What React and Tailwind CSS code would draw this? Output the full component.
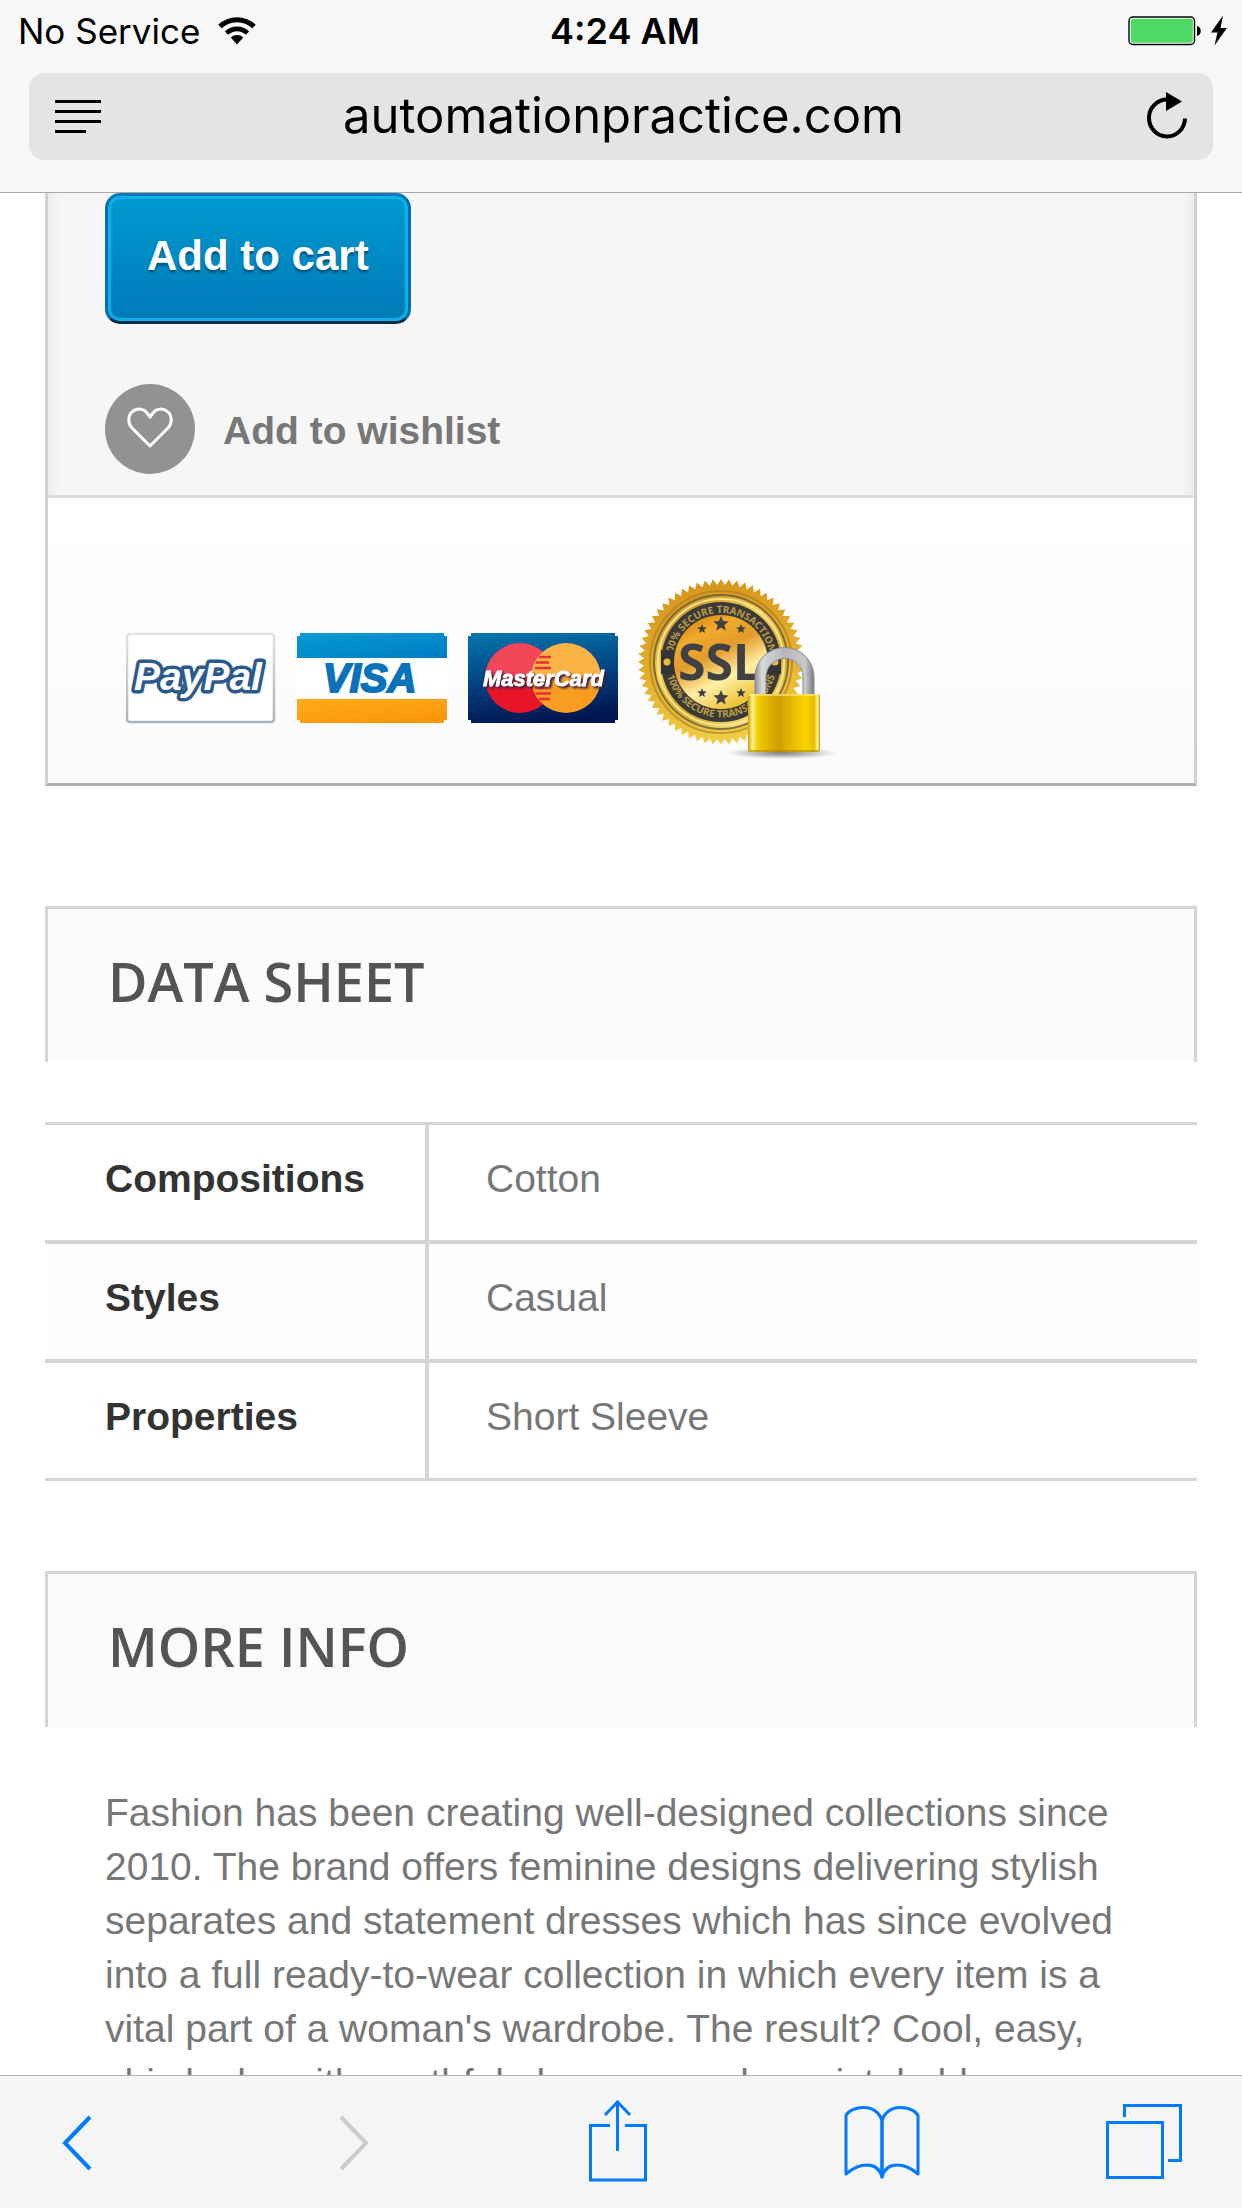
import React from "react";

const sheet = [
  ["Compositions", "Cotton"],
  ["Styles", "Casual"],
  ["Properties", "Short Sleeve"],
];

function starPoints(cx, cy, r) {
  return Array.from({ length: 10 }, (_, i) => {
    const a = (Math.PI / 5) * i - Math.PI / 2;
    const d = i % 2 ? r * 0.45 : r;
    return `${(cx + d * Math.cos(a)).toFixed(1)},${(cy + d * Math.sin(a)).toFixed(1)}`;
  }).join(" ");
}

function sealPoints(cx, cy, outer, inner, teeth) {
  return Array.from({ length: teeth * 2 }, (_, i) => {
    const a = (Math.PI / teeth) * i;
    const d = i % 2 ? inner : outer;
    return `${(cx + d * Math.cos(a)).toFixed(1)},${(cy + d * Math.sin(a)).toFixed(1)}`;
  }).join(" ");
}

function Wifi() {
  return (
    <svg width="38" height="28" viewBox="0 0 38 28" fill="none" stroke="#000" aria-label="Wi-Fi" role="img">
      <path d="M2 9.5a24.5 24.5 0 0 1 34 0" strokeWidth="5" />
      <path d="M8.5 16.2a15 15 0 0 1 21 0" strokeWidth="4.6" />
      <path d="M12.8 20.6a9 9 0 0 1 12.4 0L19 27.5Z" fill="#000" stroke="none" />
    </svg>
  );
}

function Battery() {
  return (
    <svg width="104" height="32" viewBox="0 0 104 32" aria-label="Battery charging" role="img">
      <rect x="1" y="2" width="65.5" height="27.5" rx="4" fill="#fff" stroke="#000" strokeWidth="1.4" />
      <rect x="2.8" y="3.8" width="62" height="24" rx="2.5" fill="#4cd964" />
      <path d="M69 11c5 1 5 9 0 10Z" fill="#000" />
      <path d="M95 0.5 83 17.5h6.5L86.500 30.500 99 13h-6.500Z" fill="#000" />
    </svg>
  );
}

function PayPalCard() {
  return (
    <svg width="150" height="92" viewBox="0 0 150 92" role="img" aria-label="PayPal">
      <defs>
        <linearGradient id="ppEdge" x1="0" y1="0" x2="0" y2="1">
          <stop offset="0" stopColor="#dfe4e6" />
          <stop offset="1" stopColor="#a9b4bb" />
        </linearGradient>
      </defs>
      <rect x="1" y="2" width="147" height="88" rx="3" fill="#fff" stroke="url(#ppEdge)" strokeWidth="2.6" />
      <text x="8" y="58" fontFamily="Liberation Sans, sans-serif" fontWeight="700" fontStyle="italic" fontSize="39" fill="#fff" stroke="#2c5a8c" strokeWidth="7" strokeLinejoin="round" paintOrder="stroke">PayPal</text>
    </svg>
  );
}

function VisaCard() {
  return (
    <svg width="150" height="92" viewBox="0 0 150 92" role="img" aria-label="Visa">
      <defs>
        <linearGradient id="visaTop" x1="0" y1="0" x2="1" y2="1">
          <stop offset="0" stopColor="#049bd6" />
          <stop offset="1" stopColor="#007cc4" />
        </linearGradient>
        <linearGradient id="visaBottom" x1="0" y1="0" x2="0.6" y2="1">
          <stop offset="0" stopColor="#fcab1b" />
          <stop offset="1" stopColor="#fd970a" />
        </linearGradient>
      </defs>
      <rect width="150" height="91" rx="3" fill="#fff" />
      <path d="M0 26V4h3V1h144v3h3v22Z" fill="url(#visaTop)" />
      <path d="M0 67h150v21h-3v3H3v-3H0Z" fill="url(#visaBottom)" />
      <text x="26" y="60" fontFamily="Liberation Sans, sans-serif" fontWeight="700" fontStyle="italic" fontSize="40" fill="#0a72b9" stroke="#0a72b9" strokeWidth="2">VISA</text>
    </svg>
  );
}

function MasterCard() {
  return (
    <svg width="150" height="92" viewBox="0 0 150 92" role="img" aria-label="MasterCard">
      <defs>
        <linearGradient id="mcBg" x1="0.2" y1="0" x2="0.4" y2="1">
          <stop offset="0" stopColor="#0374ab" />
          <stop offset="0.5" stopColor="#044483" />
          <stop offset="1" stopColor="#011651" />
        </linearGradient>
        <linearGradient id="mcRed" x1="0" y1="0" x2="0" y2="1">
          <stop offset="0.45" stopColor="#f24657" />
          <stop offset="0.55" stopColor="#e8152a" />
        </linearGradient>
        <linearGradient id="mcGold" x1="0" y1="0" x2="0" y2="1">
          <stop offset="0.45" stopColor="#fbb345" />
          <stop offset="0.55" stopColor="#f99d20" />
        </linearGradient>
      </defs>
      <path d="M0 4h3V1h144v3h3v84h-3v3H3v-3H0Z" fill="url(#mcBg)" />
      <circle cx="52" cy="46" r="35" fill="url(#mcRed)" />
      <circle cx="98" cy="46" r="35" fill="url(#mcGold)" />
      <path d="M71 25h12M68 30.500h13M67 36h16M67 56h13M68 61.500h15M71 67h11" stroke="#e8303a" strokeWidth="2.4" />
      <text x="15" y="54" fontFamily="Liberation Sans, sans-serif" fontWeight="700" fontStyle="italic" fontSize="22" fill="#fff" stroke="#fff" strokeWidth="0.8" className="drop-shadow-[2px_2px_1px_#3a2340]">MasterCard</text>
    </svg>
  );
}

function SslSeal() {
  return (
    <svg width="200" height="190" viewBox="0 0 200 190" role="img" aria-label="SSL 100% secure transactions">
      <defs>
        <linearGradient id="sealEdge" x1="0.4" y1="0" x2="0.6" y2="1">
          <stop offset="0" stopColor="#d8941c" />
          <stop offset="0.5" stopColor="#e2b02c" />
          <stop offset="1" stopColor="#f2d04a" />
        </linearGradient>
        <linearGradient id="sealRim" x1="0.2" y1="0" x2="0.8" y2="1">
          <stop offset="0" stopColor="#c98a18" />
          <stop offset="0.35" stopColor="#f3cf55" />
          <stop offset="0.7" stopColor="#d6a822" />
          <stop offset="1" stopColor="#fdf0a0" />
        </linearGradient>
        <linearGradient id="sealFace" x1="0.2" y1="0" x2="0.7" y2="1">
          <stop offset="0" stopColor="#d5850f" />
          <stop offset="0.2" stopColor="#f0ab2d" />
          <stop offset="0.42" stopColor="#e39c28" />
          <stop offset="0.68" stopColor="#fff0a8" />
          <stop offset="1" stopColor="#eabb20" />
        </linearGradient>
        <linearGradient id="lockBody" x1="0" y1="0" x2="1" y2="0">
          <stop offset="0" stopColor="#c9a200" />
          <stop offset="0.06" stopColor="#fff08a" />
          <stop offset="0.14" stopColor="#f0cc00" />
          <stop offset="0.42" stopColor="#cf9f00" />
          <stop offset="0.8" stopColor="#fbd500" />
          <stop offset="0.92" stopColor="#e8bd00" />
          <stop offset="0.97" stopColor="#fff3a0" />
          <stop offset="1" stopColor="#b99000" />
        </linearGradient>
        <linearGradient id="shackle" x1="0" y1="0" x2="1" y2="0">
          <stop offset="0" stopColor="#8e9094" />
          <stop offset="0.12" stopColor="#d8d9dd" />
          <stop offset="0.5" stopColor="#b5b6ba" />
          <stop offset="0.85" stopColor="#c9cacd" />
          <stop offset="1" stopColor="#77797d" />
        </linearGradient>
        <radialGradient id="lockShadow">
          <stop offset="0" stopColor="#000" stopOpacity="0.5" />
          <stop offset="1" stopColor="#000" stopOpacity="0" />
        </radialGradient>
        <path id="arcTop" d="M36 90a49 49 0 0 1 98 0" />
        <path id="arcBottom" d="M29.500 90a55.500 55.500 0 0 0 111 0" />
      </defs>
      <polygon points={sealPoints(85, 90, 83, 77, 64)} fill="url(#sealEdge)" />
      <circle cx="85" cy="90" r="71" fill="none" stroke="#a87a20" strokeWidth="2" opacity="0.6" />
      <circle cx="85" cy="90" r="68" fill="#5d5640" opacity="0.75" />
      <circle cx="85" cy="90" r="66" fill="url(#sealRim)" />
      <circle cx="85" cy="90" r="63" fill="none" stroke="#fbe48a" strokeWidth="2" />
      <circle cx="85" cy="90" r="60" fill="#3b3a38" />
      <circle cx="85" cy="90" r="47" fill="url(#sealFace)" />
      <text fontFamily="Noto Sans, sans-serif" fontWeight="700" fontSize="10" fill="#b99a45" textAnchor="middle">
        <textPath href="#arcTop" startOffset="50%">100% SECURE TRANSACTIONS</textPath>
      </text>
      <text fontFamily="Noto Sans, sans-serif" fontWeight="700" fontSize="10" fill="#b99a45" textAnchor="middle">
        <textPath href="#arcBottom" startOffset="50%">100% SECURE TRANSACTIONS</textPath>
      </text>
      <path d="M25 78h13v24H25zM132 78h13v24h-13z" fill="#33343a" />
      <circle cx="31" cy="90" r="3.500" fill="#e8bc3c" />
      <circle cx="139" cy="90" r="3.500" fill="#e8bc3c" />
      <g fill="#3f4043">
        <polygon points={starPoints(85, 52, 8)} />
        <polygon points={starPoints(66, 57, 5)} />
        <polygon points={starPoints(105, 57, 5)} />
        <polygon points={starPoints(85, 126, 8)} />
        <polygon points={starPoints(66, 121, 5)} />
        <polygon points={starPoints(105, 121, 5)} />
      </g>
      <text x="42" y="108" fontFamily="Noto Sans, sans-serif" fontWeight="700" fontSize="50" fill="#3f4145">SSL</text>
      <ellipse cx="146" cy="181" rx="55" ry="6" fill="url(#lockShadow)" />
      <path d="M119 124v-19a29.500 29.500 0 0 1 59 0v19h-11v-19a18.500 18.500 0 0 0-37 0v19Z" fill="url(#shackle)" stroke="#8b8c90" strokeWidth="1" />
      <rect x="112" y="122" width="72" height="58" rx="2" fill="url(#lockBody)" />
      <path d="M113 123h70" stroke="#fff3a0" strokeWidth="1.500" opacity="0.7" />
      <path d="M113 179h70" stroke="#a37d00" strokeWidth="1.500" opacity="0.7" />
    </svg>
  );
}

function SectionHeading({ children }) {
  return (
    <h3 className="border-x-[3px] border-t-[3px] border-[#d6d4d4] bg-[#fbfbfb] px-[60px] pt-[42px] pb-[51px] font-['Open_Sans',sans-serif] text-[54px] leading-[60px] font-semibold text-[#555454] uppercase">
      {children}
    </h3>
  );
}

export default function App() {
  return (
    <div className="flex h-screen flex-col overflow-hidden bg-white font-['Liberation_Sans',Arial,sans-serif] text-[39px] leading-[54px] text-[#777777]">
      <header className="shrink-0 border-b border-[#a9a9a9] bg-[#f7f7f7] pb-8 font-[Inter,sans-serif] text-black">
        <div className="grid h-[73px] grid-cols-3 items-center pr-[10px] pb-[11px] pl-[18px] text-[35px] leading-[40px]">
          <div className="flex items-center gap-[18px]">
            <span>No Service</span>
            <Wifi />
          </div>
          <div className="text-center text-[36px] font-semibold">4:24 AM</div>
          <div className="flex justify-end">
            <Battery />
          </div>
        </div>
        <div className="mx-[29px] flex h-[87px] items-center rounded-[15px] bg-[#e3e4e6] px-[25px]">
          <button type="button" aria-label="Reader view" className="shrink-0">
            <svg width="47" height="36" viewBox="0 0 47 36" stroke="#000" strokeWidth="3">
              <path d="M1 2.500h46M1 12.500h46M1 22.500h46M1 32.500h31" />
            </svg>
          </button>
          <input
            type="text"
            aria-label="Address"
            defaultValue="automationpractice.com"
            className="min-w-0 flex-1 bg-transparent pb-[2px] text-center text-[49px] leading-[60px] outline-none"
          />
          <button type="button" aria-label="Reload" className="shrink-0">
            <svg width="42" height="50" viewBox="0 2 42 50" fill="none" stroke="#000" strokeWidth="4">
              <path d="M21 9.500a18 18.500 0 1 0 18 19" />
              <path d="M20 2v19l16-9.500Z" fill="#000" stroke="none" />
            </svg>
          </button>
        </div>
      </header>

      <main className="min-h-0 flex-1 overflow-hidden px-[45px]">
        <section className="border-x-[3px] border-b-[3px] border-x-[#d2d0d0] border-b-[#b0b0b0]">
          <div className="flex flex-col items-start gap-[60px] border-b-[3px] border-[#dddddd] bg-[#f6f6f6] px-[57px] pb-[21px] shadow-[inset_18px_0_18px_-18px_rgba(0,0,0,0.08),inset_-18px_0_18px_-18px_rgba(0,0,0,0.08)]">
            <button
              type="button"
              className="rounded-[15px] border-[3px] border-[#0a6fa8] border-t-[#0778b3] border-b-[#012b45] bg-linear-to-b from-[#009ad0] to-[#007ab7] px-[39px] pt-[30px] pb-[35px] text-[42px] leading-[60px] font-bold text-white shadow-[inset_0_0_0_3px_#0bb1ea] [text-shadow:0_3px_2px_#015883]"
            >
              Add to cart
            </button>
            <a href="#wishlist" className="flex items-center gap-[28px] font-bold">
              <span className="flex size-[90px] items-center justify-center rounded-full bg-[#929292] pb-[3px]">
                <svg width="46" height="42" viewBox="0 0 46 42" fill="none" stroke="#fff" strokeWidth="3" strokeLinejoin="round">
                  <path d="M23 39 5 21C1 17 .5 9 5 5c5-4.500 12-3.500 15 1l3 4 3-4c3-4.500 10-5.500 15-1 4.500 4 4 12 0 16Z" />
                </svg>
              </span>
              <span className="pt-1">Add to wishlist</span>
            </a>
          </div>
          <div className="flex items-start gap-[18px] bg-linear-to-b from-white to-[#fafafa] px-[78px] pt-[74px] pb-[21px]">
            <div className="flex gap-[21px] pt-[60px]">
              <PayPalCard />
              <VisaCard />
              <MasterCard />
            </div>
            <SslSeal />
          </div>
        </section>

        <section className="mt-[120px]">
          <SectionHeading>Data sheet</SectionHeading>
          <table className="mt-[60px] w-full border-separate border-spacing-0 border-t-[3px] border-[#d6d4d4]">
            <tbody>
              {sheet.map(([name, value]) => (
                <tr key={name} className="group even:bg-[#fdfdfd]">
                  <th scope="row" className="w-1/3 border-r-[4px] border-b-[4px] border-[#d6d4d4] pt-[27px] pb-[34px] pl-[60px] text-left font-bold text-[#333333] group-last:border-b-[3px]">
                    {name}
                  </th>
                  <td className="border-b-[4px] border-[#d6d4d4] pt-[27px] pb-[34px] pl-[57px] group-last:border-b-[3px]">{value}</td>
                </tr>
              ))}
            </tbody>
          </table>
        </section>

        <section className="mt-[90px]">
          <SectionHeading>More info</SectionHeading>
          <p className="px-[60px] pt-[59px]">
            Fashion has been creating well-designed collections since 2010. The brand offers feminine designs delivering
            stylish separates and statement dresses which has since evolved into a full ready-to-wear collection in which
            every item is a vital part of a woman's wardrobe. The result? Cool, easy, chic looks with youthful elegance
            and unmistakable
          </p>
        </section>
      </main>

      <nav aria-label="Browser toolbar" className="flex h-[133px] shrink-0 items-center justify-between border-t border-[#b0b0b0] bg-[#f5f5f5] px-[60px] text-[#007aff]">
        <button type="button" aria-label="Back">
          <svg width="34" height="80" viewBox="0 0 34 80" fill="none" stroke="currentColor" strokeWidth="4">
            <path d="M30 15 5 41l25 26" />
          </svg>
        </button>
        <button type="button" aria-label="Forward" disabled className="ml-[59px] text-[#cccccc]">
          <svg width="34" height="80" viewBox="0 0 34 80" fill="none" stroke="currentColor" strokeWidth="4">
            <path d="m4 15 25 26L4 67" />
          </svg>
        </button>
        <button type="button" aria-label="Share" className="ml-[35px]">
          <svg width="58" height="84" viewBox="0 3 58 84" fill="none" stroke="currentColor" strokeWidth="3">
            <path d="M21 28.500H1.500v54.500h55V28.500H36" />
            <path d="M28.500 54V4M16 18 28.500 5l12.500 13" />
          </svg>
        </button>
        <button type="button" aria-label="Bookmarks" className="ml-[13px]">
          <svg width="76" height="80" viewBox="0 1 76 80" fill="none" stroke="currentColor" strokeWidth="3" strokeLinejoin="round">
            <path d="M38 76V20C36 12 29 6.500 20 6.500 11 6.500 4 10 2 14.500V73C9 67 16 64 23 64c8 0 13 5 15 12Z" />
            <path d="M38 76V20c2-8 9-13.500 18-13.500 9 0 16 3.500 18 8V73c-7-6-14-9-21-9-8 0-13 5-15 12Z" />
          </svg>
        </button>
        <button type="button" aria-label="Tabs" className="ml-[3px]">
          <svg width="76" height="80" viewBox="0 0 76 80" fill="none" stroke="currentColor" strokeWidth="3">
            <path d="M1.500 20.500h55v55h-55zM18.500 15V3.500h56v55H62" />
          </svg>
        </button>
      </nav>
    </div>
  );
}
